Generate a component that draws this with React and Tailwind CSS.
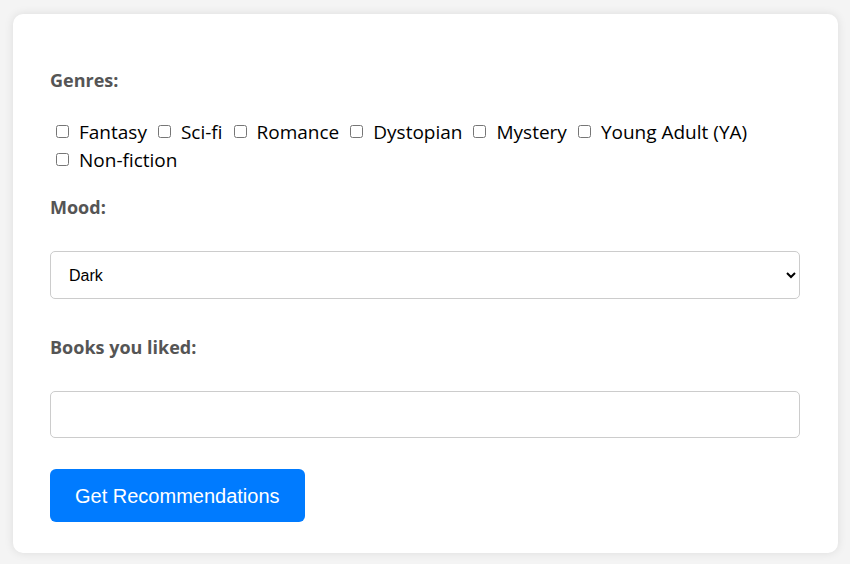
import React, { useState } from 'react';

const genres = ['Fantasy', 'Sci-fi', 'Romance', 'Dystopian', 'Mystery', 'Young Adult (YA)', 'Non-fiction'];

const App = () => {
  const [picked, setPicked] = useState([]);
  const [mood, setMood] = useState('Dark');
  const [liked, setLiked] = useState('');

  const toggle = (g) => {
    setPicked(picked.includes(g) ? picked.filter((x) => x !== g) : [...picked, g]);
  };

  return (
    <div className="min-h-[564px] bg-[#f4f4f4] pl-[13px] pt-[14px] pb-[11px]" style={{ fontFamily: '"Open Sans", sans-serif' }}>
      <div className="w-[825px] rounded-[10px] bg-white pl-[37px] pr-[38px] pt-[54px] pb-[31px] shadow-[0_0_10px_rgba(0,0,0,0.1)]">
        <label className="block text-[18px] leading-[24px] font-bold text-[#555]">Genres:</label>
        <div className="mt-[26px] text-[19px] leading-[28px] text-black">
          {genres.map((g) => (
            <label key={g} className="mr-[5px] inline-block">
              <input
                type="checkbox"
                checked={picked.includes(g)}
                onChange={() => toggle(g)}
                className="ml-[6px] mr-[10px] align-[1px]"
              />
              {g}
            </label>
          ))}
        </div>
        <label className="mt-[21px] block text-[18px] leading-[24px] font-bold text-[#555]">Mood:</label>
        <select
          value={mood}
          onChange={(e) => setMood(e.target.value)}
          className="mt-[32px] block h-[48px] w-full rounded-[5px] border border-[#ccc] bg-white px-[14px] text-[16px] text-black"
          style={{ fontFamily: '"Liberation Sans", Arial, sans-serif' }}
        >
          <option>Dark</option>
          <option>Light</option>
          <option>Adventurous</option>
          <option>Romantic</option>
        </select>
        <label className="mt-[36px] block text-[18px] leading-[24px] font-bold text-[#555]">Books you liked:</label>
        <input
          type="text"
          value={liked}
          onChange={(e) => setLiked(e.target.value)}
          className="mt-[32px] block h-[47px] w-full rounded-[5px] border border-[#ccc] px-[14px] text-[16px]"
          style={{ fontFamily: '"Liberation Sans", Arial, sans-serif' }}
        />
        <button
          className="mt-[31px] block h-[53px] rounded-[6px] bg-[#007bff] px-[25px] text-[20px] text-white"
          style={{ fontFamily: '"Liberation Sans", Arial, sans-serif' }}
        >
          Get Recommendations
        </button>
      </div>
    </div>
  );
};

export default App;
